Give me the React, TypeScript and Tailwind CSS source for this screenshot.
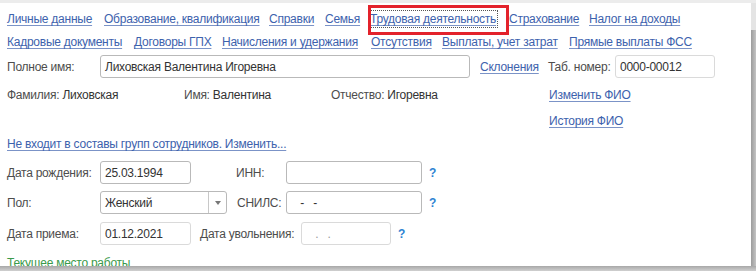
import React from 'react';

const font = { fontFamily: '"Liberation Sans", Arial, sans-serif' };

function Link({ children, className = '' }: { children: React.ReactNode; className?: string }) {
  return <span className={`text-[#3d62ad] underline underline-offset-2 decoration-[#7b93c7] whitespace-nowrap ${className}`}>{children}</span>;
}

function Field({ value, w, light, className = '', muted }: { value: string; w: string; light?: boolean; className?: string; muted?: boolean }) {
  return (
    <div className={`h-[23px] shrink-0 ${w} rounded-[3px] border ${light ? 'border-[#dadada]' : 'border-[#b9b9b9]'} bg-white flex items-center px-[4px] ${muted ? 'text-[#9a9a9a]' : 'text-[#333]'} whitespace-pre ${className}`}>
      {value}
    </div>
  );
}

function Help({ className = '' }: { className?: string }) {
  return <span className={`text-[#2f83d2] font-bold text-[12px] ${className}`}>?</span>;
}

export default function App() {
  const row1: [string, string][] = [
    ['Личные данные', 'w-[97px]'],
    ['Образование, квалификация', 'w-[165px]'],
    ['Справки', 'w-[56px]'],
    ['Семья', 'w-[45px]'],
    ['Трудовая деятельность', 'w-[139px]'],
    ['Страхование', 'w-[80px]'],
    ['Налог на доходы', 'w-[100px]'],
  ];
  const row2: [string, string][] = [
    ['Кадровые документы', 'w-[127px]'],
    ['Договоры ГПХ', 'w-[88px]'],
    ['Начисления и удержания', 'w-[149px]'],
    ['Отсутствия', 'w-[71px]'],
    ['Выплаты, учет затрат', 'w-[127px]'],
    ['Прямые выплаты ФСС', 'w-[130px]'],
  ];

  return (
    <div className="w-[756px] h-[271px] bg-[#ececec] flex flex-col overflow-hidden text-[12px] tracking-[-0.25px] text-[#4d4d4d] whitespace-nowrap" style={font}>
      <div className="h-[3px] shrink-0" />
      <div className="flex h-[263px] shrink-0">
        {/* main panel */}
        <div className="w-[751px] bg-white flex flex-col pl-[7px] overflow-hidden">
          {/* tabs */}
          <div className="relative flex h-[20px] items-center mt-[7px]">
            {row1.map(([t, w]) => (
              <span key={t} className={`${w} shrink-0`}>
                {t === 'Трудовая деятельность' ? (
                  <span className="outline-1 outline-dotted outline-[#555] outline-offset-[1px]">
                    <Link>{t}</Link>
                  </span>
                ) : (
                  <Link>{t}</Link>
                )}
              </span>
            ))}
            <div className="absolute left-[361px] top-[-5px] w-[141px] h-[30px] border-[3px] border-[#e3222b] pointer-events-none" />
          </div>
          <div className="flex h-[20px] items-center mt-[5px]">
            {row2.map(([t, w]) => (
              <span key={t} className={`${w} shrink-0`}>
                <Link>{t}</Link>
              </span>
            ))}
          </div>

          {/* full name */}
          <div className="flex items-center h-[23px] mt-[4px]">
            <span className="w-[93px] shrink-0">Полное имя:</span>
            <Field value="Лиховская Валентина Игоревна" w="w-[370px]" />
            <span className="ml-[10px] w-[68px] shrink-0"><Link>Склонения</Link></span>
            <span className="w-[67px] shrink-0">Таб. номер:</span>
            <Field value="0000-00012" w="w-[100px]" light />
          </div>

          <div className="flex items-center h-[16px] mt-[9px]">
            <span className="w-[177px] shrink-0">Фамилия: <span className="text-[#333]">Лиховская</span></span>
            <span className="w-[147px] shrink-0">Имя: <span className="text-[#333]">Валентина</span></span>
            <span className="w-[218px] shrink-0">Отчество: <span className="text-[#333]">Игоревна</span></span>
            <Link>Изменить ФИО</Link>
          </div>
          <div className="flex items-center h-[16px] mt-[10px]">
            <Link className="ml-[542px]">История ФИО</Link>
          </div>

          <div className="flex items-center h-[16px] mt-[7px]">
            <Link>Не входит в составы групп сотрудников. Изменить...</Link>
          </div>

          <div className="flex items-center h-[23px] mt-[9px]">
            <span className="w-[93px] shrink-0">Дата рождения:</span>
            <Field value="25.03.1994" w="w-[91px]" />
            <span className="ml-[45px] w-[50px] shrink-0">ИНН:</span>
            <Field value="" w="w-[136px]" />
            <Help className="ml-[7px]" />
          </div>

          <div className="flex items-center h-[23px] mt-[7px]">
            <span className="w-[93px] shrink-0">Пол:</span>
            <div className="h-[23px] w-[127px] shrink-0 rounded-[3px] border border-[#b9b9b9] flex items-center text-[#333]">
              <span className="flex-1 pl-[4px]">Женский</span>
              <span className="w-[18px] h-full border-l border-[#c8c8c8] flex items-center justify-center">
                <svg width="6" height="4" viewBox="0 0 6 4"><path d="M0 0h6L3 4z" fill="#777" /></svg>
              </span>
            </div>
            <span className="ml-[10px] w-[49px] shrink-0">СНИЛС:</span>
            <Field value="   -   -" w="w-[136px]" />
            <Help className="ml-[7px]" />
          </div>

          <div className="flex items-center h-[23px] mt-[8px]">
            <span className="w-[93px] shrink-0">Дата приема:</span>
            <Field value="01.12.2021" w="w-[91px]" light />
            <span className="ml-[9px] w-[101px] shrink-0">Дата увольнения:</span>
            <Field value="   .   ." w="w-[90px]" light muted />
            <Help className="ml-[7px]" />
          </div>

          <div className="mt-[10px] text-[#3a9a4a] leading-[16px]">Текущее место работы</div>
        </div>
        {/* right shadow */}
        <div className="w-[5px] flex flex-col">
          <div className="h-[27px] bg-[#e4e4e4]" />
          <div className="flex-1 bg-gradient-to-r from-[#9c9c9c] to-[#c4c4c4]" />
        </div>
      </div>
      <div className="flex-1 bg-gradient-to-b from-[#a8a8a8] to-[#d0d0d0]" />
    </div>
  );
}
